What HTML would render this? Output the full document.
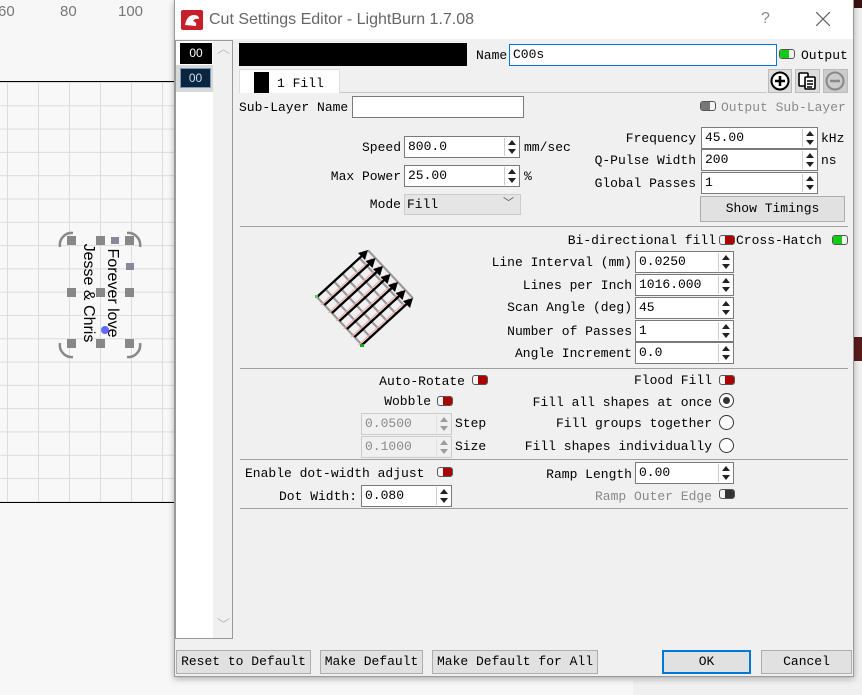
<!DOCTYPE html>
<html><head><meta charset="utf-8">
<style>
*{box-sizing:border-box;margin:0;padding:0}
body{width:862px;height:695px;overflow:hidden;background:#f7f7f7;position:relative;font-family:"Liberation Mono","Noto Sans CJK SC",monospace;font-size:13px;color:#000}
.a{position:absolute}
.lbl{position:absolute;white-space:nowrap;line-height:16px}
.r{text-align:right}
.inp{position:absolute;background:#fff;border:1px solid #7a7a7a;height:22px;line-height:20px;padding-left:3px;white-space:nowrap}
.spin{position:absolute;right:1px;top:1px;width:14px;height:18px;border-left:1px solid #ccc}
.spin:before{content:"";position:absolute;left:3px;top:2px;border:4px solid transparent;border-bottom:5px solid #222;border-top:0}
.spin:after{content:"";position:absolute;left:3px;bottom:2px;border:4px solid transparent;border-top:5px solid #222;border-bottom:0}
.tg{position:absolute;width:16px;height:10px;border:1px solid #555;border-radius:3px;overflow:hidden;background:#f4f4f4}
.tg.red:after{content:"";position:absolute;right:0;top:0;width:9px;height:8px;background:#a00}
.tg.grn:after{content:"";position:absolute;left:0;top:0;width:9px;height:8px;background:#1c1}
.tg.blk:after{content:"";position:absolute;right:0;top:0;width:9px;height:8px;background:#333}
.tg.gry:after{content:"";position:absolute;left:0;top:0;width:9px;height:8px;background:#777}
.sep{position:absolute;left:240px;width:608px;height:1px;background:#a0a0a0}
.btn{position:absolute;background:#e1e1e1;border:1px solid #adadad;text-align:center;line-height:22px;white-space:nowrap}
.rad{position:absolute;width:15px;height:15px;border:1px solid #333;border-radius:50%;background:#fff}
.dis{color:#8a8a8a}
</style></head><body>
<div class="a" style="left:0;top:0;width:175px;height:82px;background:#f7f7f7"></div>
<div class="lbl" style="left:-2px;top:4px;font-family:'Liberation Sans',sans-serif;font-size:15px;color:#777">60</div>
<div class="lbl" style="left:60px;top:4px;font-family:'Liberation Sans',sans-serif;font-size:15px;color:#777">80</div>
<div class="lbl" style="left:118px;top:4px;font-family:'Liberation Sans',sans-serif;font-size:15px;color:#777">100</div>
<div class="a" style="left:0;top:81px;width:175px;height:422px;border-top:1px solid #000;border-bottom:1px solid #000;background-color:#f8f8f8;background-image:linear-gradient(to right,#dcdcdc 1px,transparent 1px),linear-gradient(to bottom,#dcdcdc 1px,transparent 1px);background-size:31px 23.3px;background-position:7px 0px"></div>
<div class="lbl" style="left:112px;top:293px;transform:translate(-50%,-50%) rotate(90deg);font-family:'Liberation Sans',sans-serif;font-size:16px;line-height:16px">Forever love</div>
<div class="lbl" style="left:88px;top:293px;transform:translate(-50%,-50%) rotate(90deg);font-family:'Liberation Sans',sans-serif;font-size:16px;line-height:16px">Jesse &amp; Chris</div>
<div class="a" style="left:67px;top:236px;width:9px;height:9px;background:#888"></div>
<div class="a" style="left:96px;top:236px;width:9px;height:9px;background:#888"></div>
<div class="a" style="left:111px;top:237px;width:8px;height:7px;background:#889"></div>
<div class="a" style="left:125px;top:236px;width:9px;height:9px;background:#888"></div>
<div class="a" style="left:126px;top:263px;width:8px;height:7px;background:#889"></div>
<div class="a" style="left:67px;top:288px;width:9px;height:9px;background:#888"></div>
<div class="a" style="left:96px;top:288px;width:9px;height:9px;background:#888"></div>
<div class="a" style="left:125px;top:288px;width:9px;height:9px;background:#888"></div>
<div class="a" style="left:67px;top:339px;width:9px;height:9px;background:#888"></div>
<div class="a" style="left:96px;top:339px;width:9px;height:9px;background:#888"></div>
<div class="a" style="left:125px;top:339px;width:9px;height:9px;background:#888"></div>
<div class="a" style="left:101px;top:326px;width:8px;height:8px;border-radius:50%;background:#66f"></div>
<svg class="a" style="left:55px;top:225px" width="90" height="140" fill="none" stroke="#888" stroke-width="2.5">
<path d="M5 22 A12 12 0 0 1 18 8"/><path d="M72 8 A12 12 0 0 1 85 22"/><path d="M5 118 A12 12 0 0 0 18 132"/><path d="M72 132 A12 12 0 0 0 85 118"/>
</svg>
<div class="a" style="left:853px;top:0;width:9px;height:695px;background:#f0f0f0"></div>
<div class="a" style="left:853px;top:0;width:9px;height:8px;background:#3b1212"></div>
<div class="a" style="left:853px;top:337px;width:9px;height:24px;background:#5a1a1a"></div>
<div class="a" style="left:633px;top:680px;width:229px;height:15px;background:#f0f0f0"></div>
<div class="a" style="left:174px;top:0;width:680px;height:677px;background:#f0f0f0;border:1px solid #999;box-shadow:0 2px 6px rgba(0,0,0,.3)"></div>
<div class="a" style="left:175px;top:0;width:678px;height:39px;background:#fff"></div>
<svg class="a" style="left:181px;top:10px" width="22" height="20"><rect width="22" height="20" rx="2" fill="#c8202a"/><path d="M4 15 Q6 5 13 5 Q18 5 18 9 Q14 8 12 11 Q16 12 15 16 Z" fill="#fff"/></svg>
<div class="lbl" style="left:209px;top:11px;font-family:'Liberation Sans',sans-serif;font-size:16px;color:#666;line-height:18px">Cut Settings Editor - LightBurn 1.7.08</div>
<div class="lbl" style="left:761px;top:11px;font-family:'Liberation Sans',sans-serif;font-size:16px;color:#888">?</div>
<svg class="a" style="left:816px;top:12px" width="14" height="14" stroke="#666" stroke-width="1.3"><path d="M0 0L14 14M14 0L0 14"/></svg>
<div class="a" style="left:175px;top:40px;width:58px;height:599px;background:#fff;border:1px solid #999"></div>
<div class="a" style="left:213px;top:41px;width:19px;height:597px;background:#f0f0f0"></div>
<div class="lbl" style="left:217px;top:42px;color:#bbb">︿</div>
<div class="lbl" style="left:217px;top:618px;color:#bbb">﹀</div>
<div class="a" style="left:180px;top:43px;width:32px;height:21px;background:#000;color:#fff;text-align:center;line-height:21px;font-family:'Liberation Sans',sans-serif;font-size:12px">00</div>
<div class="a" style="left:176px;top:65px;width:37px;height:27px;background:#d8d8d8"></div>
<div class="a" style="left:180px;top:68px;width:31px;height:20px;background:#0a2540;border:1px solid #7a9ab8;color:#cde;text-align:center;line-height:18px;font-family:'Liberation Sans',sans-serif;font-size:12px">00</div>
<div class="a" style="left:239px;top:43px;width:228px;height:23px;background:#000"></div>
<div class="lbl" style="left:476px;top:48px">Name</div>
<div class="inp" style="left:509px;top:44px;width:268px;border:1px solid #0078d7">C00s</div>
<div class="tg grn" style="left:779px;top:49px"></div>
<div class="lbl" style="left:801px;top:48px">Output</div>
<div class="a" style="left:239px;top:92px;width:528px;height:1px;background:#c8c8c8"></div>
<div class="a" style="left:239px;top:69px;width:101px;height:24px;background:#fff;border:1px solid #ddd;border-bottom:none"></div>
<div class="a" style="left:254px;top:72px;width:15px;height:21px;background:#000"></div>
<div class="lbl" style="left:277px;top:76px">1 Fill</div>
<div class="a" style="left:768px;top:69px;width:24px;height:24px;background:#ddd;border:1px solid #bbb"></div>
<svg class="a" style="left:770px;top:71px" width="20" height="20"><circle cx="10" cy="10" r="8.5" fill="#fff" stroke="#000" stroke-width="2"/><path d="M10 5v10M5 10h10" stroke="#000" stroke-width="2.5"/></svg>
<div class="a" style="left:795px;top:69px;width:25px;height:24px;background:#ddd;border:1px solid #bbb"></div>
<svg class="a" style="left:797px;top:71px" width="21" height="20" fill="#fff" stroke="#000" stroke-width="1.6"><rect x="2" y="2" width="9" height="13" rx="1"/><rect x="8" y="6" width="10" height="12" rx="1"/><path d="M10 10h6M10 13h6M10 16h5"/></svg>
<div class="a" style="left:823px;top:69px;width:25px;height:24px;background:#ccc;border:1px solid #bbb"></div>
<svg class="a" style="left:825px;top:71px" width="20" height="20"><circle cx="10" cy="10" r="8.5" fill="none" stroke="#888" stroke-width="2"/><path d="M5 10h10" stroke="#888" stroke-width="2.5"/></svg>
<div class="lbl" style="left:239px;top:100px">Sub-Layer Name</div>
<div class="inp" style="left:352px;top:96px;width:172px"></div>
<div class="tg gry" style="left:700px;top:101px"></div>
<div class="lbl dis" style="left:721px;top:100px">Output Sub-Layer</div>
<div class="lbl r" style="left:300px;width:101px;top:140px">Speed</div>
<div class="inp" style="left:404px;top:136px;width:116px">800.0<div class="spin"></div></div>
<div class="lbl" style="left:524px;top:140px">mm/sec</div>
<div class="lbl r" style="left:300px;width:101px;top:169px">Max Power</div>
<div class="inp" style="left:404px;top:165px;width:116px">25.00<div class="spin"></div></div>
<div class="lbl" style="left:524px;top:169px">%</div>
<div class="lbl r" style="left:300px;width:101px;top:197px">Mode</div>
<div class="a" style="left:404px;top:194px;width:117px;height:21px;background:#e5e5e5;border:1px solid #ccc;line-height:19px;padding-left:2px">Fill<span style="position:absolute;right:6px;top:0;font-size:11px;color:#555">﹀</span></div>
<div class="lbl r" style="left:560px;width:136px;top:131px">Frequency</div>
<div class="inp" style="left:701px;top:127px;width:117px">45.00<div class="spin"></div></div>
<div class="lbl" style="left:821px;top:131px">kHz</div>
<div class="lbl r" style="left:560px;width:136px;top:153px">Q-Pulse Width</div>
<div class="inp" style="left:701px;top:149px;width:117px">200<div class="spin"></div></div>
<div class="lbl" style="left:821px;top:153px">ns</div>
<div class="lbl r" style="left:560px;width:136px;top:176px">Global Passes</div>
<div class="inp" style="left:701px;top:172px;width:117px">1<div class="spin"></div></div>
<div class="btn" style="left:700px;top:196px;width:145px;height:26px;line-height:24px">Show Timings</div>
<div class="sep" style="top:226px"></div>
<svg class="a" style="left:300px;top:240px" width="120" height="120">
<g stroke="#9a9a9a" stroke-width="2.2">
<path d="M17 57l45 48M25.5 49.2l45 48M34 41.4l45 48M42.5 33.6l45 48M51 25.8l45 48M59.5 18l45 48M68 10.2l45 48"/>
</g>
<g stroke="#f0a8a8" stroke-width="1">
<path d="M21 65l51 -47M28.5 73l51 -47M36 81l51 -47M43.5 89l51 -47M51 97l51 -47M58.5 105l51 -47"/>
</g>
<g stroke="#000" stroke-width="2.3">
<path d="M17 57l48 -44M24.5 65l48 -44M32 73l48 -44M39.5 81l48 -44M47 89l48 -44M54.5 97l48 -44M62 105l48 -44"/>
</g>
<g fill="#000">
<path d="M68 10l-10 3 7 7z"/><path d="M75.5 18l-10 3 7 7z"/><path d="M83 26l-10 3 7 7z"/><path d="M90.5 34l-10 3 7 7z"/><path d="M98 42l-10 3 7 7z"/><path d="M105.5 50l-10 3 7 7z"/><path d="M113 58l-10 3 7 7z"/>
</g>
<rect x="15" y="55" width="3" height="3" fill="#5c5"/><rect x="60" y="104" width="4" height="3" fill="#1a1"/>
</svg>
<div class="lbl r" style="left:540px;width:176px;top:233px">Bi-directional fill</div>
<div class="tg red" style="left:719px;top:235px"></div>
<div class="lbl" style="left:736px;top:233px">Cross-Hatch</div>
<div class="tg grn" style="left:832px;top:235px"></div>
<div class="lbl r" style="left:440px;width:192px;top:255px">Line Interval (mm)</div>
<div class="inp" style="left:635px;top:251px;width:99px">0.0250<div class="spin"></div></div>
<div class="lbl r" style="left:440px;width:192px;top:278px">Lines per Inch</div>
<div class="inp" style="left:635px;top:274px;width:99px">1016.000<div class="spin"></div></div>
<div class="lbl r" style="left:440px;width:192px;top:300px">Scan Angle (deg)</div>
<div class="inp" style="left:635px;top:297px;width:99px">45<div class="spin"></div></div>
<div class="lbl r" style="left:440px;width:192px;top:324px">Number of Passes</div>
<div class="inp" style="left:635px;top:320px;width:99px">1<div class="spin"></div></div>
<div class="lbl r" style="left:440px;width:192px;top:346px">Angle Increment</div>
<div class="inp" style="left:635px;top:342px;width:99px">0.0<div class="spin"></div></div>
<div class="sep" style="top:368px"></div>
<div class="lbl r" style="left:300px;width:165px;top:374px">Auto-Rotate</div>
<div class="tg red" style="left:472px;top:375px"></div>
<div class="lbl r" style="left:300px;width:131px;top:394px">Wobble</div>
<div class="tg red" style="left:437px;top:396px"></div>
<div class="inp dis" style="left:361px;top:413px;width:91px;border-color:#ccc;background:#f0f0f0">0.0500<div class="spin" style="opacity:.4"></div></div>
<div class="lbl" style="left:455px;top:416px">Step</div>
<div class="inp dis" style="left:361px;top:436px;width:91px;border-color:#ccc;background:#f0f0f0">0.1000<div class="spin" style="opacity:.4"></div></div>
<div class="lbl" style="left:455px;top:439px">Size</div>
<div class="lbl r" style="left:500px;width:212px;top:373px">Flood Fill</div>
<div class="tg red" style="left:719px;top:375px"></div>
<div class="lbl r" style="left:500px;width:212px;top:395px">Fill all shapes at once</div>
<div class="rad" style="left:719px;top:393px"><div class="a" style="left:3px;top:3px;width:7px;height:7px;border-radius:50%;background:#333"></div></div>
<div class="lbl r" style="left:500px;width:212px;top:416px">Fill groups together</div>
<div class="rad" style="left:719px;top:415px"></div>
<div class="lbl r" style="left:500px;width:212px;top:439px">Fill shapes individually</div>
<div class="rad" style="left:719px;top:438px"></div>
<div class="sep" style="top:459px"></div>
<div class="lbl" style="left:245px;top:466px">Enable dot-width adjust</div>
<div class="tg red" style="left:437px;top:467px"></div>
<div class="lbl r" style="left:250px;width:107px;top:489px">Dot Width:</div>
<div class="inp" style="left:361px;top:485px;width:91px">0.080<div class="spin"></div></div>
<div class="lbl r" style="left:500px;width:132px;top:467px">Ramp Length</div>
<div class="inp" style="left:635px;top:462px;width:99px">0.00<div class="spin"></div></div>
<div class="lbl r dis" style="left:500px;width:212px;top:489px">Ramp Outer Edge</div>
<div class="tg blk" style="left:719px;top:489px"></div>
<div class="sep" style="top:508px"></div>
<div class="btn" style="left:176px;top:650px;width:135px;height:24px">Reset to Default</div>
<div class="btn" style="left:320px;top:650px;width:103px;height:24px">Make Default</div>
<div class="btn" style="left:432px;top:650px;width:166px;height:24px">Make Default for All</div>
<div class="btn" style="left:662px;top:650px;width:89px;height:24px;border:2px solid #0078d7;line-height:20px">OK</div>
<div class="btn" style="left:761px;top:650px;width:91px;height:24px">Cancel</div>
</body></html>
